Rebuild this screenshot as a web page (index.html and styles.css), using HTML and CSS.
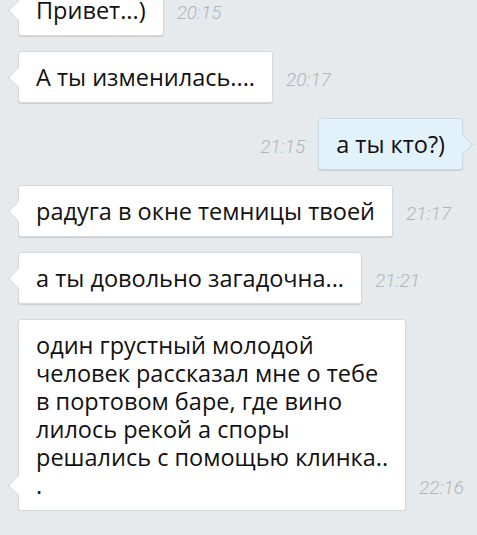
FILE: index.html
```html
<!DOCTYPE html>
<html lang="ru">
<head>
    <meta charset="UTF-8">
    <meta name="viewport" content="width=device-width, initial-scale=1.0">
    <title>Чат</title>
    <link rel="stylesheet" href="styles.css">
</head>
<body>
    <div class="chat">
        <div class="row in">
            <div class="bubble">Привет...)</div>
            <span class="time">20:15</span>
        </div>
        <div class="row in">
            <div class="bubble">А ты изменилась....</div>
            <span class="time">20:17</span>
        </div>
        <div class="row out">
            <span class="time">21:15</span>
            <div class="bubble">а ты кто?)</div>
        </div>
        <div class="row in">
            <div class="bubble">радуга в окне темницы твоей</div>
            <span class="time">21:17</span>
        </div>
        <div class="row in">
            <div class="bubble">а ты довольно загадочна...</div>
            <span class="time">21:21</span>
        </div>
        <div class="row in">
            <div class="bubble">один грустный молодой<br>человек рассказал мне о тебе<br>в портовом баре, где вино<br>лилось рекой а споры<br>решались с помощью клинка..<br>.</div>
            <span class="time">22:16</span>
        </div>
    </div>
</body>
</html>
```

FILE: styles.css
```css
body {
    margin: 0;
    padding: 0;
    background-color: #e6eaed;
    font-family: "Open Sans", "Noto Sans", sans-serif;
    overflow: hidden;
}
.chat {
    display: flex;
    flex-direction: column;
    gap: 15px;
    margin-top: -16px;
    padding: 0 14px 0 18px;
}
.row {
    display: flex;
    align-items: flex-end;
    gap: 13px;
}
.row.out {
    justify-content: flex-end;
}
.bubble {
    position: relative;
    background: #fff;
    color: #111;
    font-size: 23.5px;
    line-height: 28px;
    padding: 11px 17px;
    border: 1px solid #d3d9dd;
    border-radius: 3px;
    box-shadow: 0 1px 1px rgba(0, 0, 0, 0.12);
    white-space: nowrap;
}
.bubble::before {
    content: "";
    position: absolute;
    bottom: 17px;
    width: 14px;
    height: 14px;
    background: inherit;
    transform: rotate(45deg);
}
.in .bubble::before {
    left: -8px;
    border-left: 1px solid #d3d9dd;
    border-bottom: 1px solid #d3d9dd;
}
.out .bubble {
    background: #e2f2fa;
    border-color: #c9d9e2;
}
.out .bubble::before {
    right: -8px;
    border-top: 1px solid #c9d9e2;
    border-right: 1px solid #c9d9e2;
}
.time {
    flex-shrink: 0;
    font-family: Roboto, sans-serif;
    font-style: italic;
    font-weight: 300;
    font-size: 19px;
    line-height: 20px;
    color: #aeb6bb;
    margin-bottom: 13px;
}
```
